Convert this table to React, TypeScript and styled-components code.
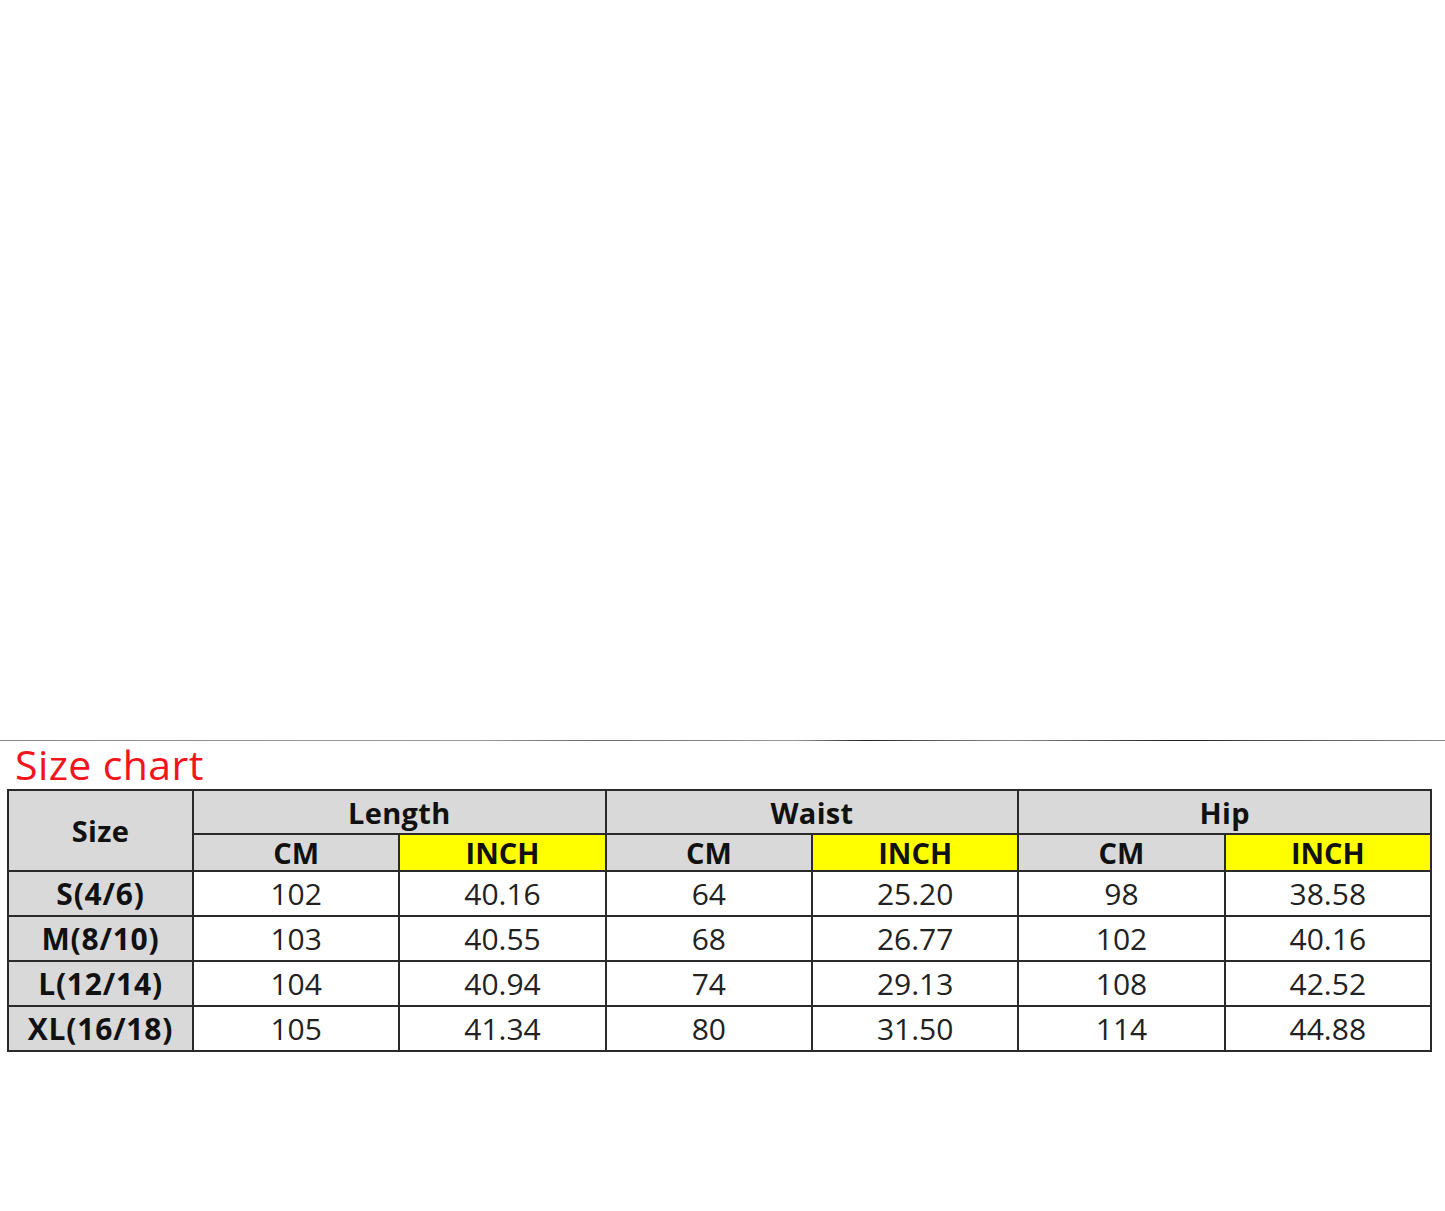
import React from "react";
import styled, { createGlobalStyle } from "styled-components";

const Global = createGlobalStyle`
  html, body { margin: 0; padding: 0; background: #fff; }
  body { font-family: "Open Sans", "Noto Sans", "DejaVu Sans", sans-serif; }
`;

const Page = styled.div`
  width: 1445px;
  height: 1211px;
  display: flex;
  flex-direction: column;
  background: #fff;
`;

const Spacer = styled.div`
  height: 740px;
  flex: none;
`;

const Rule = styled.div`
  height: 1px;
  flex: none;
  background: linear-gradient(
    to right,
    #8a8a8a 0%,
    #9a9a9a 33%,
    #6a6a6a 41%,
    #9a9a9a 55%,
    #222 60%,
    #555 64%,
    #8a8a8a 70%,
    #1a1a1a 82%,
    #444 86%,
    #8a8a8a 100%
  );
`;

const Title = styled.h1`
  margin: 0;
  padding-left: 15px;
  height: 48px;
  line-height: 47px;
  font-size: 41px;
  font-weight: 400;
  color: #f2141b;
  letter-spacing: 0.4px;
`;

const Table = styled.table`
  margin-left: 7px;
  width: 1425px;
  border-collapse: collapse;
  table-layout: fixed;
  border: 2px solid #2a2a2a;
`;

const Cell = styled.td<{
  $bg?: string;
  $h: number;
  $bold?: boolean;
  $size?: number;
  $spacing?: number;
}>`
  border: 2px solid #2a2a2a;
  background: ${(p) => p.$bg ?? "#fff"};
  height: ${(p) => p.$h}px;
  padding: 0;
  box-sizing: border-box;
  text-align: center;
  vertical-align: middle;
  font-size: ${(p) => p.$size ?? 30}px;
  font-weight: ${(p) => (p.$bold ? 700 : 400)};
  letter-spacing: ${(p) => p.$spacing ?? 0}px;
  color: ${(p) => (p.$bold ? "#111" : "#222")};
  line-height: 1;
  white-space: nowrap;
`;

const GRAY = "#d9d9d9";
const YELLOW = "#ffff00";

const groups = ["Length", "Waist", "Hip"];

const rows: [string, string, string, string, string, string, string][] = [
  ["S(4/6)", "102", "40.16", "64", "25.20", "98", "38.58"],
  ["M(8/10)", "103", "40.55", "68", "26.77", "102", "40.16"],
  ["L(12/14)", "104", "40.94", "74", "29.13", "108", "42.52"],
  ["XL(16/18)", "105", "41.34", "80", "31.50", "114", "44.88"],
];

export default function App() {
  return (
    <Page>
      <Global />
      <Spacer />
      <Rule />
      <Title>Size chart</Title>
      <Table>
        <colgroup>
          <col style={{ width: 185 }} />
          {Array.from({ length: 6 }).map((_, i) => (
            <col key={i} />
          ))}
        </colgroup>
        <tbody>
          <tr>
            <Cell as="th" rowSpan={2} $bg={GRAY} $h={44} $bold $size={29} $spacing={0.4}>
              Size
            </Cell>
            {groups.map((g) => (
              <Cell as="th" key={g} colSpan={2} $bg={GRAY} $h={44} $bold $size={29} $spacing={0.3}>
                {g}
              </Cell>
            ))}
          </tr>
          <tr>
            {groups.map((g) => (
              <React.Fragment key={g}>
                <Cell as="th" $bg={GRAY} $h={37} $bold $size={29}>
                  CM
                </Cell>
                <Cell as="th" $bg={YELLOW} $h={37} $bold $size={29}>
                  INCH
                </Cell>
              </React.Fragment>
            ))}
          </tr>
          {rows.map((r) => (
            <tr key={r[0]}>
              <Cell as="th" $bg={GRAY} $h={45} $bold $size={30} $spacing={0.8}>
                {r[0]}
              </Cell>
              {r.slice(1).map((v, i) => (
                <Cell key={i} $h={45}>
                  {v}
                </Cell>
              ))}
            </tr>
          ))}
        </tbody>
      </Table>
    </Page>
  );
}
